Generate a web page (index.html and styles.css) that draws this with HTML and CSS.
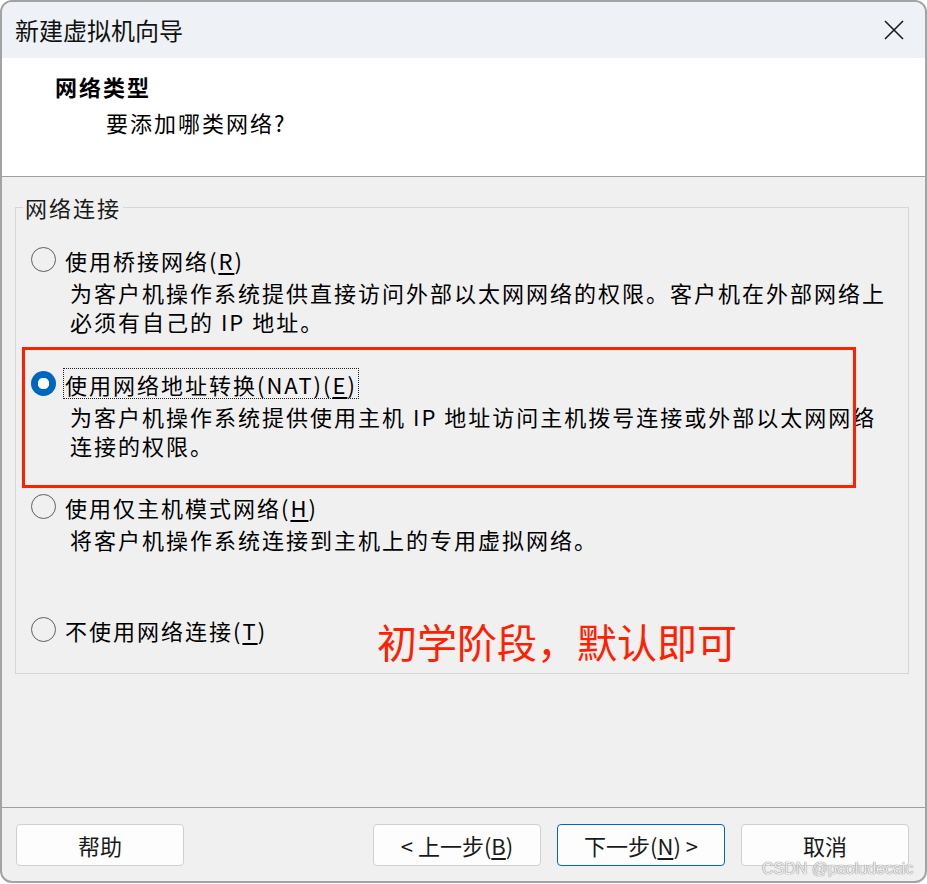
FILE: index.html
```html
<!DOCTYPE html>
<html lang="zh-CN">
<head>
<meta charset="utf-8">
<title>新建虚拟机向导</title>
<link rel="stylesheet" href="styles.css">
</head>
<body>
<div class="window">
  <div class="titlebar">
    <span class="title">新建虚拟机向导</span>
    <svg class="close" width="20" height="20" viewBox="0 0 20 20"><path d="M1 1 L19 19 M19 1 L1 19" stroke="#1b1b1b" stroke-width="1.6" fill="none"/></svg>
  </div>
  <div class="header">
    <div class="heading">网络类型</div>
    <div class="sub">要添加哪类网络?</div>
  </div>
  <div class="body">
    <fieldset class="group">
      <legend class="legend">网络连接</legend>
      <div class="options">
        <div class="option">
          <div class="opt-head"><span class="radio"></span><span class="label">使用桥接网络(<u>R</u>)</span></div>
          <div class="desc">为客户机操作系统提供直接访问外部以太网网络的权限。客户机在外部网络上<br>必须有自己的 IP 地址。</div>
        </div>
        <div class="option">
          <div class="opt-head"><span class="radio checked"></span><span class="label focus">使用网络地址转换(NAT)(<u>E</u>)</span></div>
          <div class="desc">为客户机操作系统提供使用主机 IP 地址访问主机拨号连接或外部以太网网络<br>连接的权限。</div>
        </div>
        <div class="option">
          <div class="opt-head"><span class="radio"></span><span class="label">使用仅主机模式网络(<u>H</u>)</span></div>
          <div class="desc">将客户机操作系统连接到主机上的专用虚拟网络。</div>
        </div>
        <div class="option">
          <div class="opt-head"><span class="radio"></span><span class="label">不使用网络连接(<u>T</u>)</span></div>
        </div>
      </div>
    </fieldset>
  </div>
  <div class="footer">
    <button class="btn">帮助</button>
    <div class="spacer"></div>
    <button class="btn">&lt; 上一步(<u>B</u>)</button>
    <button class="btn primary">下一步(<u>N</u>) &gt;</button>
    <button class="btn">取消</button>
  </div>
  <div class="redbox"></div>
  <div class="note">初学阶段，默认即可</div>
  <div class="watermark">CSDN @paoludecaic</div>
</div>
</body>
</html>
```
FILE: styles.css
```css
* { box-sizing: border-box; }
html, body { margin: 0; padding: 0; background: #ffffff; }
body {
  font-family: "Noto Sans CJK SC", "Noto Sans", sans-serif;
  color: #000;
}
.window {
  position: relative;
  width: 927px;
  height: 883px;
  border: 2px solid #a3a3a3;
  border-radius: 12px;
  overflow: hidden;
  background: #f0f0f0;
  display: flex;
  flex-direction: column;
}
.titlebar {
  height: 56px;
  flex: none;
  background: #eef2f6;
  display: flex;
  align-items: center;
  justify-content: space-between;
  padding-left: 13px;
  padding-right: 21px;
}
.title { font-size: 24px; line-height: 30px; color: #111; }
.close { display: block; }
.header {
  height: 119px;
  flex: none;
  background: #ffffff;
  border-bottom: 1px solid #a0a0a0;
  padding: 13px 0 0 53px;
}
.heading { font-size: 22px; font-weight: bold; letter-spacing: 2px; line-height: 30px; }
.sub { font-size: 22px; letter-spacing: 2px; line-height: 30px; margin: 6px 0 0 51px; }
.body {
  flex: 1;
  padding: 16px 16px 0 13px;
}
.group {
  margin: 0;
  padding: 23px 0 29px 15px;
  border: 1px solid #d6d6d6;
  min-width: 0;
}
.legend {
  font-size: 22px;
  letter-spacing: 2px;
  line-height: 28px;
  padding: 0 2px;
  margin-left: -8px;
  color: #1a1a1a;
}
.options {
  display: grid;
  grid-template-rows: 124px 123px 123px auto;
}
.opt-head {
  display: flex;
  align-items: center;
  height: 30px;
}
.radio {
  width: 25px;
  height: 25px;
  border-radius: 50%;
  border: 1.5px solid #5f5f5f;
  flex: none;
  margin-right: 7px;
}
.radio.checked {
  border: none;
  background: radial-gradient(circle, #ffffff 0 5.5px, #0067c0 6px);
}
.label {
  font-size: 22px;
  letter-spacing: 2px;
  line-height: 30px;
  height: 31px;
  padding: 0 1px;
  border: 1px dotted transparent;
  white-space: nowrap;
}
.label.focus { border-color: #222; }
.desc {
  font-size: 22px;
  letter-spacing: 2px;
  line-height: 29px;
  margin: 4px 0 0 39px;
  white-space: nowrap;
}
u { text-underline-offset: 3px; }
.footer {
  height: 74px;
  flex: none;
  border-top: 1px solid #a0a0a0;
  display: flex;
  align-items: flex-start;
  gap: 16px;
  padding: 16px 16px 0 14px;
}
.spacer { flex: 1; }
.btn {
  width: 168px;
  height: 42px;
  background: #fdfdfd;
  border: 1px solid #d0d0d0;
  border-radius: 4px;
  font-family: "Noto Sans CJK SC", "Noto Sans", sans-serif;
  font-size: 22px;
  color: #1a1a1a;
  padding: 0;
  line-height: 38px;
}
.btn.primary { border-color: #0067c0; }
.redbox {
  position: absolute;
  left: 20px;
  top: 345px;
  width: 834px;
  height: 141px;
  border: 3px solid #ff2000;
}
.note {
  position: absolute;
  left: 375px;
  top: 615px;
  font-size: 40px;
  line-height: 48px;
  color: #ff2000;
}
.watermark {
  position: absolute;
  left: 760px;
  top: 857px;
  font-family: "Liberation Sans", sans-serif;
  font-size: 16px;
  line-height: 20px;
  color: #eeeeee;
  text-shadow: 0 0 1px #8a8a8a, 0 0 1px #8a8a8a;
  white-space: nowrap;
}
```
